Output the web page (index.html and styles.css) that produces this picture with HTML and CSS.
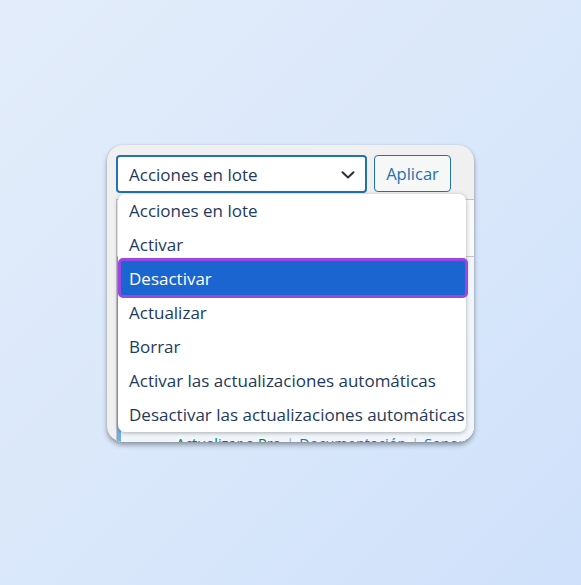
FILE: index.html
```html
<!DOCTYPE html>
<html lang="es">
<head>
<meta charset="utf-8">
<title>Acciones en lote</title>
<link rel="stylesheet" href="styles.css">
</head>
<body>
<div class="card">
  <div class="toolbar">
    <div class="select">
      <span>Acciones en lote</span>
      <svg class="chev" width="14" height="8" viewBox="0 0 14 8"><path d="M1.5 1.2 L7 6.5 L12.5 1.2" fill="none" stroke="#2c3338" stroke-width="2" stroke-linecap="round" stroke-linejoin="round"/></svg>
    </div>
    <button class="apply">Aplicar</button>
  </div>
  <div class="table">
    <div class="row head"></div>
    <div class="row active">
      <div class="links"><span class="pro">Actualizar a Pro</span><span class="sep">|</span><span class="lnk">Documentación</span><span class="sep">|</span><span class="lnk">Soporte</span></div>
    </div>
  </div>
  <ul class="menu">
    <li>Acciones en lote</li>
    <li>Activar</li>
    <li class="sel">Desactivar</li>
    <li>Actualizar</li>
    <li>Borrar</li>
    <li>Activar las actualizaciones automáticas</li>
    <li>Desactivar las actualizaciones automáticas</li>
  </ul>
</div>
</body>
</html>
```
FILE: styles.css
```css
html, body { height: 100%; }
body {
  margin: 0;
  background: linear-gradient(135deg, #e3edfa 0%, #d9e7fa 55%, #cfe1fa 100%);
  font-family: "Open Sans", "Noto Sans", sans-serif;
  padding: 145px 0 0 107px;
  box-sizing: border-box;
}
.card {
  position: relative;
  width: 367px;
  height: 297px;
  background: #f0f0f1;
  border-radius: 16px;
  overflow: hidden;
  box-shadow: 0 3px 5px rgba(0, 0, 0, 0.35), 0 0 2px rgba(0,0,0,0.12);
  box-sizing: border-box;
}
.toolbar {
  display: flex;
  gap: 7px;
  padding: 10px 0 0 9px;
  height: 48px;
  box-sizing: border-box;
}
.select {
  width: 251px;
  height: 38px;
  box-sizing: border-box;
  border: 2px solid #2271b1;
  border-radius: 4px;
  background: #fff;
  display: flex;
  align-items: center;
  justify-content: space-between;
  padding: 0 10px 0 11px;
  color: #1e3a5c;
  font-size: 17px;
}
.chev { margin-top: 1px; }
.apply {
  width: 77px;
  height: 37px;
  box-sizing: border-box;
  border: 1px solid #2271b1;
  border-radius: 4px;
  background: #f6f7f7;
  color: #2271b1;
  font-family: inherit;
  font-size: 16.5px;
  padding: 0;
}
.table {
  margin: 6px 0 0 9px;
  background: #fff;
  border: 1px solid #c3c4c7;
  border-right: none;
}
.row.head {
  height: 56px;
  border-bottom: 1px solid #c3c4c7;
  background: #f9f9f9;
}
.row.active {
  height: 240px;
  border-left: 4px solid #72aee6;
  background: #f0f6fc;
  display: flex;
  flex-direction: column;
  justify-content: flex-end;
  box-sizing: border-box;
  padding-bottom: 43px;
}
.links {
  padding-left: 55px;
  font-size: 14.5px;
  line-height: 20px;
  white-space: nowrap;
  color: #2271b1;
}
.pro { color: #008a20; }
.sep { color: #a7aaad; margin: 0 5px; }
.menu {
  position: absolute;
  left: 11px;
  top: 49px;
  width: 348px;
  margin: 0;
  padding: 0;
  list-style: none;
  background: #fff;
  border-radius: 7px;
  box-shadow: 0 1px 4px rgba(0, 0, 0, 0.3);
}
.menu li {
  position: relative;
  height: 34px;
  line-height: 34px;
  padding-left: 11px;
  font-size: 17px;
  color: #1e3a5c;
  white-space: nowrap;
}
.menu li.sel { color: #fff; z-index: 1; }
.menu li.sel::before {
  content: "";
  position: absolute;
  left: 0;
  right: -2px;
  top: -4px;
  bottom: -2px;
  background: #1b65d1;
  border: 3px solid #9a46e3;
  border-radius: 5px;
  z-index: -1;
}
```
